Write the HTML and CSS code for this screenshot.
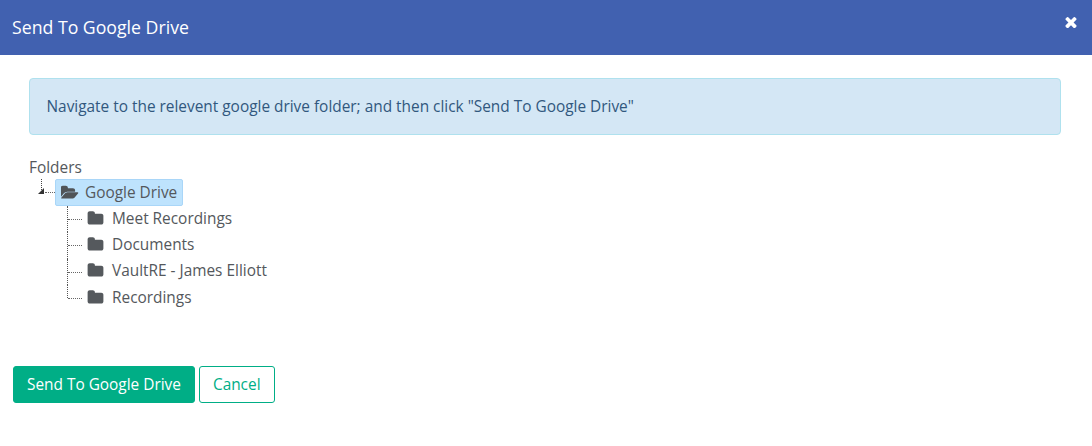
FILE: index.html
```html
<!DOCTYPE html>
<html lang="en">
<head>
<meta charset="utf-8">
<title>Send To Google Drive</title>
<link rel="stylesheet" href="styles.css">
</head>
<body>
<header class="modal-header">
  <h1 class="modal-title">Send To Google Drive</h1>
  <button class="close" aria-label="Close">
    <svg class="close-icon" viewBox="256 256 1280 1280"><path d="M1490 1322q0 40-28 68l-136 136q-28 28-68 28t-68-28l-294-294-294 294q-28 28-68 28t-68-28l-136-136q-28-28-28-68t28-68l294-294-294-294q-28-28-28-68t28-68l136-136q28-28 68-28t68 28l294 294 294-294q28-28 68-28t68 28l136 136q28 28 28 68t-28 68l-294 294 294 294q28 28 28 68z"/></svg>
  </button>
</header>
<main class="modal-body">
  <div class="alert">Navigate to the relevent google drive folder; and then click "Send To Google Drive"</div>
  <div class="tree-label">Folders</div>
  <div class="tree">
    <div class="root-row">
      <span class="expander"></span>
      <span class="root-node">
        <svg class="icon-open" viewBox="0 0 1920 1792"><path d="M1845 931q0 35-53 93l-336 396q-43 51-120.500 86.500t-143.500 35.500h-1088q-34 0-60.500-13t-26.500-43q0-35 53-93l336-396q43-51 120.500-86.500t143.500-35.500h1088q34 0 60.500 13t26.500 43zM1502 656v160h-832q-94 0-197 47.500t-164 119.500l-337 396-5 6q0-4-.5-12.500t-.5-12.500v-960q0-92 66-158t158-66h320q92 0 158 66t66 158v32h544q92 0 158 66t66 158z"/></svg>
        Google Drive
      </span>
    </div>
    <ul class="children">
      <li class="child"><svg class="icon-folder" viewBox="0 0 1792 1792"><path d="M1728 608v704q0 92-66 158t-158 66h-1216q-92 0-158-66t-66-158v-960q0-92 66-158t158-66h320q92 0 158 66t66 158v32h672q92 0 158 66t66 158z"/></svg>Meet Recordings</li>
      <li class="child"><svg class="icon-folder" viewBox="0 0 1792 1792"><path d="M1728 608v704q0 92-66 158t-158 66h-1216q-92 0-158-66t-66-158v-960q0-92 66-158t158-66h320q92 0 158 66t66 158v32h672q92 0 158 66t66 158z"/></svg>Documents</li>
      <li class="child"><svg class="icon-folder" viewBox="0 0 1792 1792"><path d="M1728 608v704q0 92-66 158t-158 66h-1216q-92 0-158-66t-66-158v-960q0-92 66-158t158-66h320q92 0 158 66t66 158v32h672q92 0 158 66t66 158z"/></svg>VaultRE - James Elliott</li>
      <li class="child"><svg class="icon-folder" viewBox="0 0 1792 1792"><path d="M1728 608v704q0 92-66 158t-158 66h-1216q-92 0-158-66t-66-158v-960q0-92 66-158t158-66h320q92 0 158 66t66 158v32h672q92 0 158 66t66 158z"/></svg>Recordings</li>
    </ul>
  </div>
</main>
<footer class="actions">
  <button class="btn btn-primary">Send To Google Drive</button>
  <button class="btn btn-outline">Cancel</button>
</footer>
</body>
</html>
```
FILE: styles.css
```css
* { box-sizing: border-box; }
html, body { margin: 0; padding: 0; background: #fff; }
body { font-family: "Open Sans", sans-serif; font-size: 15.4px; color: #54585c; }
.modal-header { height: 55px; background: #4161b0; display: flex; align-items: center; justify-content: space-between; padding: 0 15px 2px 12px; }
.modal-title { margin: 0; font-size: 17.7px; font-weight: 400; color: #fff; line-height: 22px; }
.close { border: 0; background: none; padding: 0; display: flex; margin-top: -9px; }
.close-icon { width: 12px; height: 12px; fill: #fff; }
.modal-body { padding: 23px 31px 0 29px; }
.alert { height: 57px; display: flex; align-items: center; padding: 0 16.5px; background: #d4e7f5; border: 1px solid #afe1ee; border-radius: 4px; color: #31587e; }
.tree-label { margin-top: 22px; line-height: 21px; }
.tree { margin-top: 1px; }
.root-row { display: flex; height: 27px; padding-left: 26px; position: relative; }
.root-row::before { content: ""; position: absolute; left: 12px; top: 0; height: 11px; border-left: 1px dotted #444; }
.root-row::after { content: ""; position: absolute; left: 16px; top: 13px; width: 10px; border-top: 1px dotted #666; }
.expander { position: absolute; left: 9px; top: 9px; width: 0; height: 0; border-style: solid; border-width: 0 0 6px 6px; border-color: transparent transparent #333 transparent; }
.root-node { display: flex; align-items: center; gap: 6px; height: 27px; padding: 0 5px; background: #bee3fd; border: 1px solid #a9d6f8; border-radius: 2px; }
.icon-open { width: 18px; height: 17px; fill: #505458; }
.children { list-style: none; margin: 0 0 0 38px; padding: 0; }
.child { position: relative; display: flex; align-items: center; height: 26.33px; padding: 0 0 2px 20px; }
.child::before { content: ""; position: absolute; left: 0; top: 0; bottom: 0; border-left: 1px dotted #555; }
.child::after { content: ""; position: absolute; left: 1px; top: 13px; width: 14px; border-top: 1px dotted #666; }
.child:last-child::before { bottom: 13px; }
.icon-folder { width: 17px; height: 17px; fill: #55595d; margin-right: 8px; }
.actions { display: flex; gap: 4px; padding-left: 13px; margin-top: 55px; }
.btn { height: 37px; padding: 0 13px; font-family: "Open Sans", sans-serif; font-size: 15.4px; border-radius: 3px; }
.btn-primary { background: #00ae86; border: 1px solid #00ae86; color: #fff; }
.btn-outline { background: #fff; border: 1px solid #00ae86; color: #00ae86; }
```
